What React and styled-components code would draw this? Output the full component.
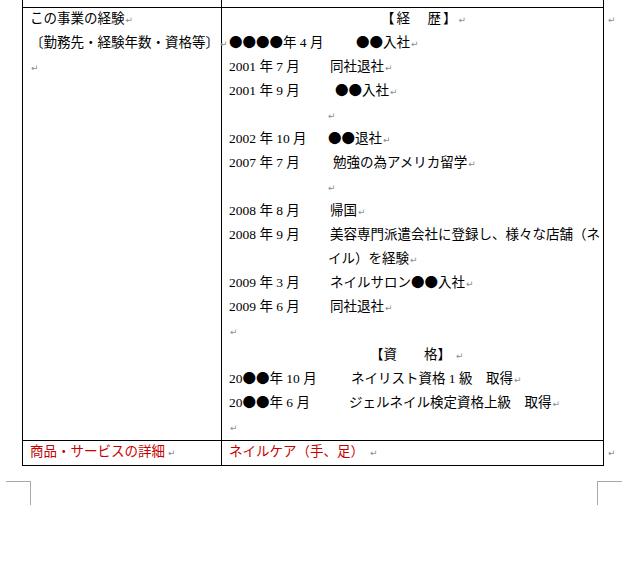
import styled, { createGlobalStyle } from 'styled-components';

const GlobalStyle = createGlobalStyle`
  html, body {
    margin: 0;
    padding: 0;
    background: #fff;
  }
  body {
    font-family: 'Liberation Serif', 'Noto Sans CJK JP', serif;
    font-size: 13.5px;
    color: #000;
  }
`;

const experience = [
  { text: 'この事業の経験' },
  { text: '〔勤務先・経験年数・資格等〕' },
  { text: '' }
];

const career = [
  { heading: '【経　歴】', indent: 152, spread: 2, gap: 0 },
  { date: '●●●●年 4 月', at: 127, event: '●●入社' },
  { date: '2001 年 7 月', at: 101, event: '同社退社' },
  { date: '2001 年 9 月', at: 106, event: '●●入社' },
  { blank: 98 },
  { date: '2002 年 10 月', at: 99, event: '●●退社' },
  { date: '2007 年 7 月', at: 104, event: '勉強の為アメリカ留学' },
  { blank: 98 },
  { date: '2008 年 8 月', at: 101, event: '帰国' },
  { date: '2008 年 9 月', at: 101, event: '美容専門派遣会社に登録し、様々な店舗（ネ', open: true },
  { date: '', at: 99, event: 'イル）を経験' },
  { date: '2009 年 3 月', at: 101, event: 'ネイルサロン●●入社' },
  { date: '2009 年 6 月', at: 101, event: '同社退社' },
  { blank: 0 },
  { heading: '【資　　格】', indent: 141, spread: 0, gap: 5 },
  { date: '20●●年 10 月', at: 122, event: 'ネイリスト資格 1 級　取得' },
  { date: '20●●年 6 月', at: 120, event: 'ジェルネイル検定資格上級　取得' },
  { blank: 0 }
];

// ● は和文フォントで全角幅に
const blots = (str) =>
  str.split(/(●+)/).map((part, i) =>
    part.startsWith('●') ? <StBlot key={i}>{part}</StBlot> : part
  );

const CareerLine = ({ item }) => {
  if (item.heading) {
    return (
      <StLine $indent={item.indent}>
        <StHeading $spread={item.spread}>{item.heading}</StHeading>
        <StMark $gap={item.gap}>↵</StMark>
      </StLine>
    );
  }
  if ('blank' in item) {
    return (
      <StLine $indent={item.blank}>
        <StMark>↵</StMark>
      </StLine>
    );
  }
  return (
    <StLine>
      <StDate $width={item.at}>{blots(item.date)}</StDate>
      {blots(item.event)}
      {!item.open && <StMark>↵</StMark>}
    </StLine>
  );
};

const App = () => {
  return (
    <StPage>
      <GlobalStyle />
      <StTable>
        <colgroup>
          <col width={199} />
          <col width={382} />
          <col width={31} />
        </colgroup>
        <tbody>
          <StStubRow>
            <StCell />
            <StCell />
            <StRowEnd />
          </StStubRow>
          <tr>
            <StCell>
              {experience.map((line, i) => (
                <StLine key={i}>
                  {line.text}
                  <StMark>↵</StMark>
                </StLine>
              ))}
            </StCell>
            <StCell>
              {career.map((item, i) => (
                <CareerLine key={i} item={item} />
              ))}
            </StCell>
            <StRowEnd>
              <StLine>
                <StMark>↵</StMark>
              </StLine>
            </StRowEnd>
          </tr>
          <tr>
            <StCell $red>
              <StLine>
                商品・サービスの詳細<StMark $gap={3}>↵</StMark>
              </StLine>
            </StCell>
            <StCell $red>
              <StLine>
                ネイルケア（手、足）<StMark $gap={6}>↵</StMark>
              </StLine>
            </StCell>
            <StRowEnd>
              <StLine>
                <StMark>↵</StMark>
              </StLine>
            </StRowEnd>
          </tr>
        </tbody>
      </StTable>
      <StPageGap>
        <StCorner $side="left" />
        <StCorner $side="right" />
      </StPageGap>
    </StPage>
  );
};

const StPage = styled.div`
  width: 640px;
  height: 576px;
  overflow: hidden;
  background: #fff;
`;

const StTable = styled.table`
  width: 612px;
  margin-left: 22px;
  border-collapse: collapse;
  table-layout: fixed;
`;

const StStubRow = styled.tr`
  height: 7px;

  & > td {
    border-top: none;
    height: 7px;
  }
`;

const StCell = styled.td`
  border: 1px solid #000;
  padding: 0 0 0 7px;
  vertical-align: top;
  overflow: visible;
  color: ${(p) => (p.$red ? '#c80000' : '#000')};
`;

const StRowEnd = styled.td`
  border: none;
  padding: 0 0 0 3px;
  vertical-align: top;
`;

const StLine = styled.div`
  height: 24px;
  line-height: 24px;
  margin-top: -1px;
  margin-bottom: 1px;
  white-space: nowrap;
  padding-left: ${(p) => p.$indent || 0}px;
`;

const StHeading = styled.span`
  letter-spacing: ${(p) => p.$spread || 0}px;
`;

const StDate = styled.span`
  display: inline-block;
  width: ${(p) => p.$width}px;
`;

const StBlot = styled.span`
  font-family: 'Noto Sans CJK JP', sans-serif;
  line-height: 1;
`;

const StMark = styled.span`
  font-family: 'DejaVu Sans', sans-serif;
  font-size: 9px;
  line-height: 1;
  color: #8c8c8c;
  margin-left: ${(p) => p.$gap ?? 1}px;
`;

const StPageGap = styled.div`
  display: flex;
  justify-content: space-between;
  padding: 15px 18px 0 6px;
`;

const StCorner = styled.div`
  width: 24px;
  height: 23px;
  border-top: 1px solid #a8a8a8;
  border-${(p) => (p.$side === 'left' ? 'right' : 'left')}: 1px solid #a8a8a8;
`;

export default App;
